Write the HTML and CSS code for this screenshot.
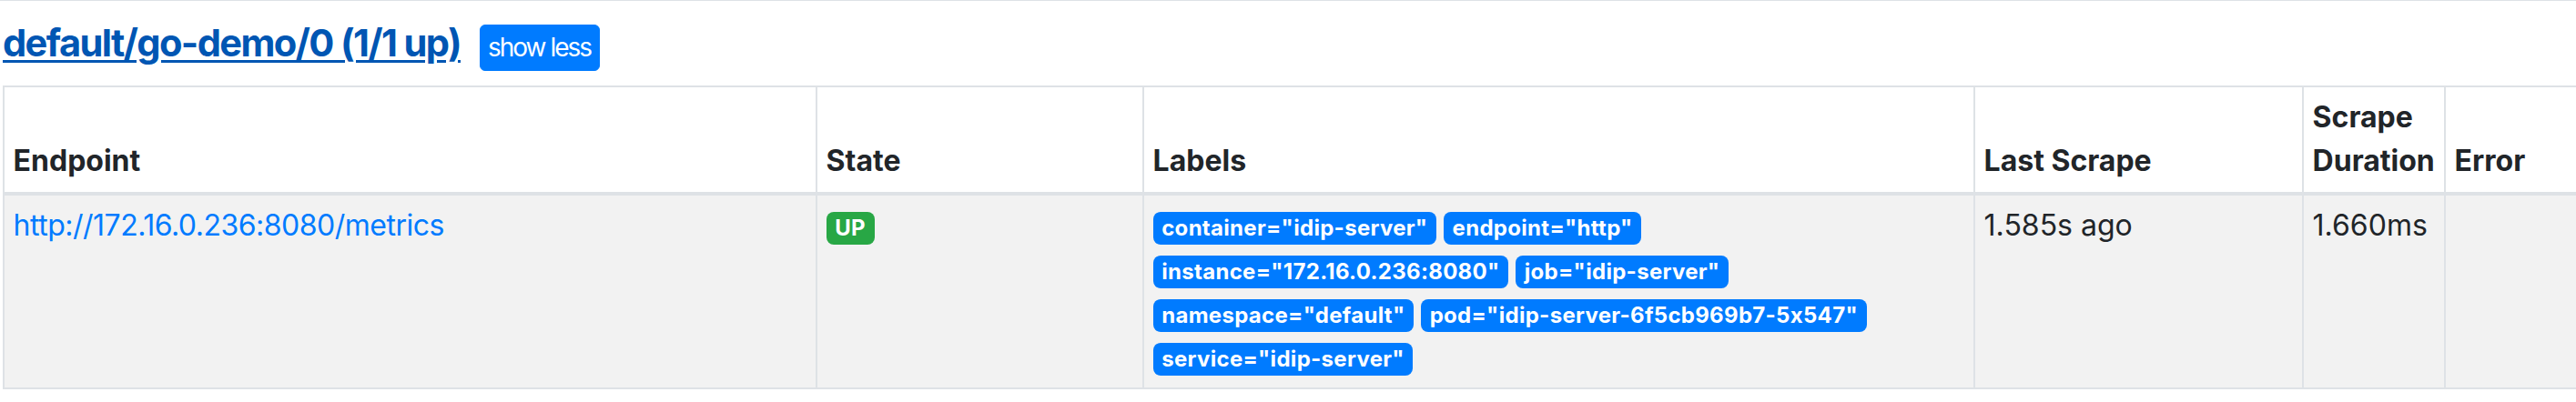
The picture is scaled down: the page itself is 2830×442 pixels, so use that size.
FILE: index.html
```html
<!DOCTYPE html>
<html lang="en">
<head>
<meta charset="utf-8">
<title>Targets</title>
<link rel="stylesheet" href="styles.css">
</head>
<body>
<div class="page">
  <section class="pool">
    <h3 class="pool-title"><a class="pool-link" href="#default/go-demo/0">default/go-demo/0 (1/1 up)</a><button class="btn-xs" type="button">show less</button></h3>
    <table class="targets">
      <colgroup>
        <col class="c-endpoint">
        <col class="c-state">
        <col class="c-labels">
        <col class="c-last">
        <col class="c-duration">
        <col>
      </colgroup>
      <thead>
        <tr>
          <th>Endpoint</th>
          <th>State</th>
          <th>Labels</th>
          <th>Last Scrape</th>
          <th>Scrape Duration</th>
          <th>Error</th>
        </tr>
      </thead>
      <tbody>
        <tr>
          <td><a class="endpoint-link" href="#">http://172.16.0.236:8080/metrics</a></td>
          <td><span class="badge badge-success">UP</span></td>
          <td>
            <div class="labels"><span class="badge badge-primary">container="idip-server"</span><span class="badge badge-primary">endpoint="http"</span><span class="badge badge-primary">instance="172.16.0.236:8080"</span><span class="badge badge-primary">job="idip-server"</span><span class="badge badge-primary">namespace="default"</span><span class="badge badge-primary">pod="idip-server-6f5cb969b7-5x547"</span><span class="badge badge-primary">service="idip-server"</span></div>
          </td>
          <td>1.585s ago</td>
          <td>1.660ms</td>
          <td></td>
        </tr>
      </tbody>
    </table>
  </section>
</div>
</body>
</html>
```
FILE: styles.css
```css
html, body {
  margin: 0;
  padding: 0;
  background: #fff;
}

body {
  font-family: Inter, "Noto Sans", sans-serif;
  font-size: 32px;
  line-height: 48px;
  color: #212529;
  overflow: hidden;
  font-feature-settings: "calt" 0;
}

.page {
  border-top: 1px solid #dee2e6;
  padding-left: 3px;
  overflow: hidden;
}

.pool-title {
  display: flex;
  align-items: baseline;
  margin: 22px 0 16px 0;
  font-size: 41.6px;
  line-height: 1.2;
  font-weight: 700;
}

.pool-link {
  color: #0056b3;
  letter-spacing: -1.6px;
  text-decoration: underline;
  text-decoration-thickness: 3px;
  text-underline-offset: 4px;
}

.btn-xs {
  margin-left: 21px;
  font-family: inherit;
  font-feature-settings: "calt" 0;
  font-size: 28px;
  font-weight: 400;
  letter-spacing: -2px;
  line-height: 42px;
  padding: 3.5px 9px 3.5px 8px;
  border: 1px solid #007bff;
  background: #007bff;
  color: #fff;
  border-radius: 6px;
}

.targets {
  border-collapse: collapse;
  table-layout: fixed;
  width: 2900px;
}

.c-endpoint { width: 893px; }
.c-state { width: 359px; }
.c-labels { width: 913px; }
.c-last { width: 361px; }
.c-duration { width: 156px; }

.targets th,
.targets td {
  padding: 9.6px;
  border: 2px solid #dee2e6;
  text-align: left;
  vertical-align: top;
}

.targets th {
  vertical-align: bottom;
  border-bottom-width: 4px;
  font-weight: 700;
  background: #fff;
}

.targets tbody tr {
  background: #f2f2f2;
}

.endpoint-link {
  color: #007bff;
  letter-spacing: -0.5px;
  text-decoration: none;
}

.badge {
  display: inline-block;
  font-size: 24px;
  font-weight: 700;
  letter-spacing: 0.3px;
  line-height: 1;
  padding: 6px 9.6px;
  border-radius: 8px;
  color: #fff;
  white-space: nowrap;
  vertical-align: baseline;
}

.badge-primary {
  background: #007bff;
  margin-right: 8px;
}

.badge-success {
  background: #28a745;
}
```
